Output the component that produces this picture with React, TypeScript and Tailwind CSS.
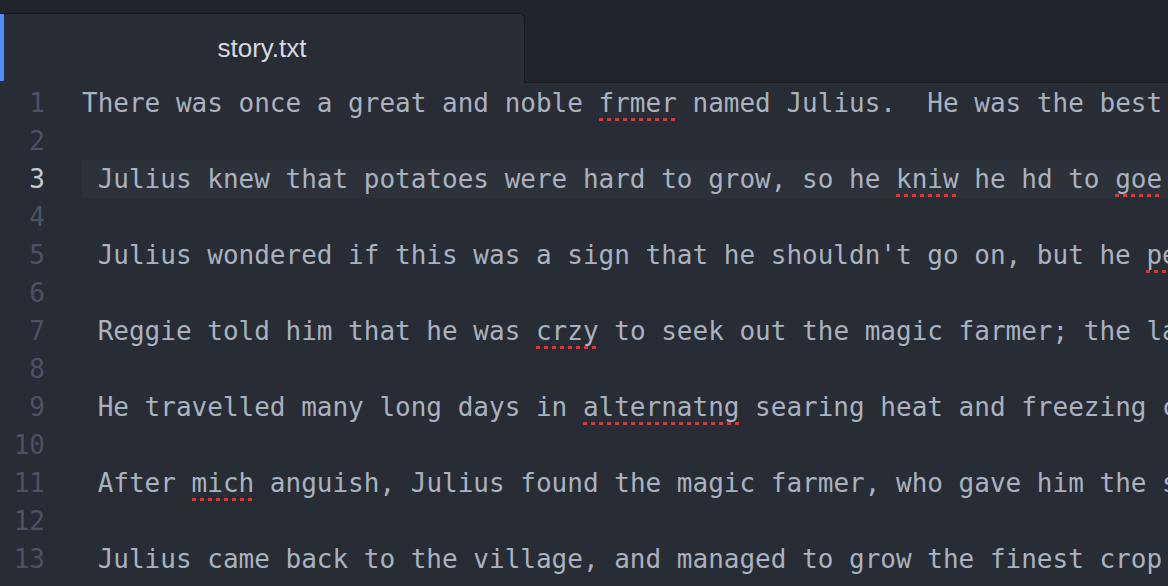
import React from "react";

type Seg = string | { bad: string };

const lines: Seg[][] = [
  ["There was once a great and noble ", { bad: "frmer" }, " named Julius.  He was the best farmer in all the land."],
  [],
  [" Julius knew that potatoes were hard to grow, so he ", { bad: "kniw" }, " he hd to ", { bad: "goe" }, " find the magic farmer."],
  [],
  [" Julius wondered if this was a sign that he shouldn't go on, but he ", { bad: "pesevered" }, " anyway."],
  [],
  [" Reggie told him that he was ", { bad: "crzy" }, " to seek out the magic farmer; the last man who tried never came back."],
  [],
  [" He travelled many long days in ", { bad: "alternatng" }, " searing heat and freezing cold."],
  [],
  [" After ", { bad: "mich" }, " anguish, Julius found the magic farmer, who gave him the secret."],
  [],
  [" Julius came back to the village, and managed to grow the finest crop of potatoes ever seen."],
  [],
];

const CURRENT = 3;

export default function App() {
  return (
    <div className="h-[586px] w-full overflow-hidden bg-[#282c34] flex flex-col">
      {/* Tab bar */}
      <div className="h-[83px] shrink-0 bg-[#21252b] flex items-end">
        <div className="relative w-[525px] h-[70px] bg-[#282c34] border-t border-r border-[#181a1f] rounded-tr-[6px] flex items-center justify-center">
          <div className="absolute left-0 top-0 bottom-[2px] w-[4px] bg-[#528bff] rounded-r-[1px]" />
          <span className="font-['Liberation_Sans',Arial,sans-serif] text-[26px] text-[#d7dae0] -mt-[1px]">
            story.txt
          </span>
        </div>
        <div className="flex-1 h-full border-b border-[#181a1f]" />
      </div>

      {/* Editor */}
      <div className="flex-1 pt-px font-['DejaVu_Sans_Mono',monospace] text-[26px] leading-[38px]">
        {lines.map((segs, i) => {
          const n = i + 1;
          const active = n === CURRENT;
          return (
            <div key={n} className="flex h-[38px]">
              <div
                className={`w-[82px] shrink-0 text-right pr-[37px] ${
                  active ? "text-[#c5cad3]" : "text-[#4b5263]"
                }`}
              >
                {n}
              </div>
              <div
                className={`flex-1 overflow-hidden whitespace-pre text-[#abb2bf] ${
                  active ? "bg-[#2c313a]" : ""
                }`}
              >
                {segs.map((s, j) =>
                  typeof s === "string" ? (
                    <span key={j}>{s}</span>
                  ) : (
                    <span key={j} className="relative">
                      {s.bad}
                      <span className="absolute left-0 right-0 top-full h-[3px] bg-[image:repeating-linear-gradient(90deg,#d33b3b_0_4px,transparent_4px_8px)]" />
                    </span>
                  )
                )}
              </div>
            </div>
          );
        })}
      </div>
    </div>
  );
}
